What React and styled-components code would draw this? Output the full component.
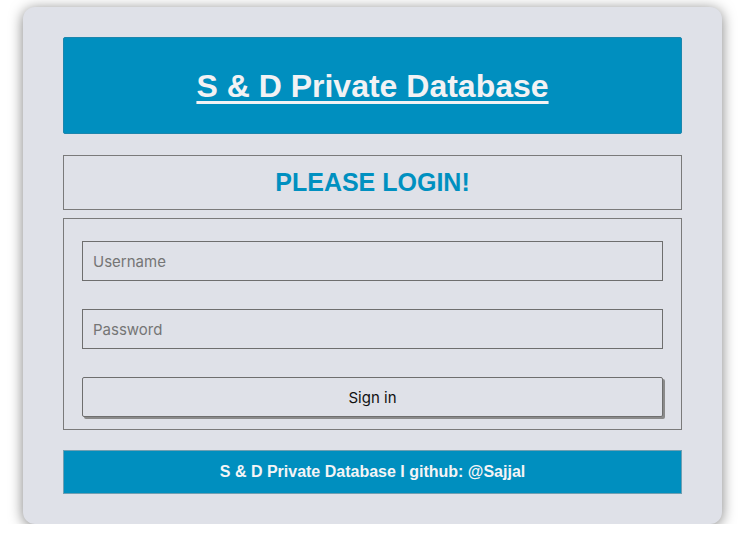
import styled, { createGlobalStyle } from "styled-components";

const Global = createGlobalStyle`
  html, body { margin: 0; padding: 0; background: #fff; }
  body { font-family: "Liberation Sans", Arial, sans-serif; }
  * { box-sizing: border-box; }
`;

const Page = styled.div`
  padding: 7px 23px 0 23px;
  width: 745px;
`;

const Card = styled.div`
  width: 699px;
  background: #dfe1e8;
  border-radius: 12px;
  box-shadow: 0 2px 14px rgba(0, 0, 0, 0.5);
  padding: 30px 40px;
  display: flex;
  flex-direction: column;
`;

const Header = styled.div`
  height: 97px;
  background: #008fbf;
  border: 1px solid #1c86ad;
  border-radius: 2px;
  display: flex;
  align-items: center;
  justify-content: center;
`;

const Title = styled.a`
  color: #f2f2f4;
  font-size: 32px;
  font-weight: 700;
  text-decoration: underline;
  text-decoration-thickness: 3px;
  text-underline-offset: 4px;
  margin-top: 2px;
`;

const Panel = styled.div`
  border: 1px solid #7a7a7a;
  margin-top: ${({ $gap }) => $gap}px;
`;

const LoginTitle = styled.h2`
  margin: 0;
  height: 53px;
  display: flex;
  align-items: center;
  justify-content: center;
  color: #0090c0;
  font-size: 25px;
  font-weight: 700;
`;

const Form = styled.form`
  display: flex;
  flex-direction: column;
  gap: 28px;
  padding: 22px 18px 12px;
`;

const Input = styled.input`
  height: 40px;
  width: 100%;
  border: 1px solid #6e6e6e;
  background: #dfe1e8;
  padding: 0 10px;
  font-family: Inter, "Open Sans", sans-serif;
  font-size: 15px;
  color: #222;
  outline: none;
  &::placeholder { color: #757575; }
`;

const Button = styled.button`
  height: 40px;
  width: 100%;
  border: 1px solid #6e6e6e;
  border-radius: 2px;
  background: #dfe1e8;
  box-shadow: 2px 2px 0 #8a8a8a;
  font-family: Inter, "Open Sans", sans-serif;
  font-size: 15px;
  color: #111;
  cursor: pointer;
`;

const Footer = styled.div`
  margin-top: 20px;
  height: 44px;
  background: #008fbf;
  border: 1px solid #6f9fb2;
  display: flex;
  align-items: center;
  justify-content: center;
  color: #f4f4f6;
  font-size: 16px;
  font-weight: 700;
`;

export default function App() {
  return (
    <Page>
      <Global />
      <Card>
        <Header>
          <Title href="#">S &amp; D Private Database</Title>
        </Header>
        <Panel $gap={21}>
          <LoginTitle>PLEASE LOGIN!</LoginTitle>
        </Panel>
        <Panel $gap={8}>
          <Form onSubmit={(e) => e.preventDefault()}>
            <Input type="text" placeholder="Username" />
            <Input type="password" placeholder="Password" />
            <Button type="submit">Sign in</Button>
          </Form>
        </Panel>
        <Footer>S &amp; D Private Database I github: @Sajjal</Footer>
      </Card>
    </Page>
  );
}
